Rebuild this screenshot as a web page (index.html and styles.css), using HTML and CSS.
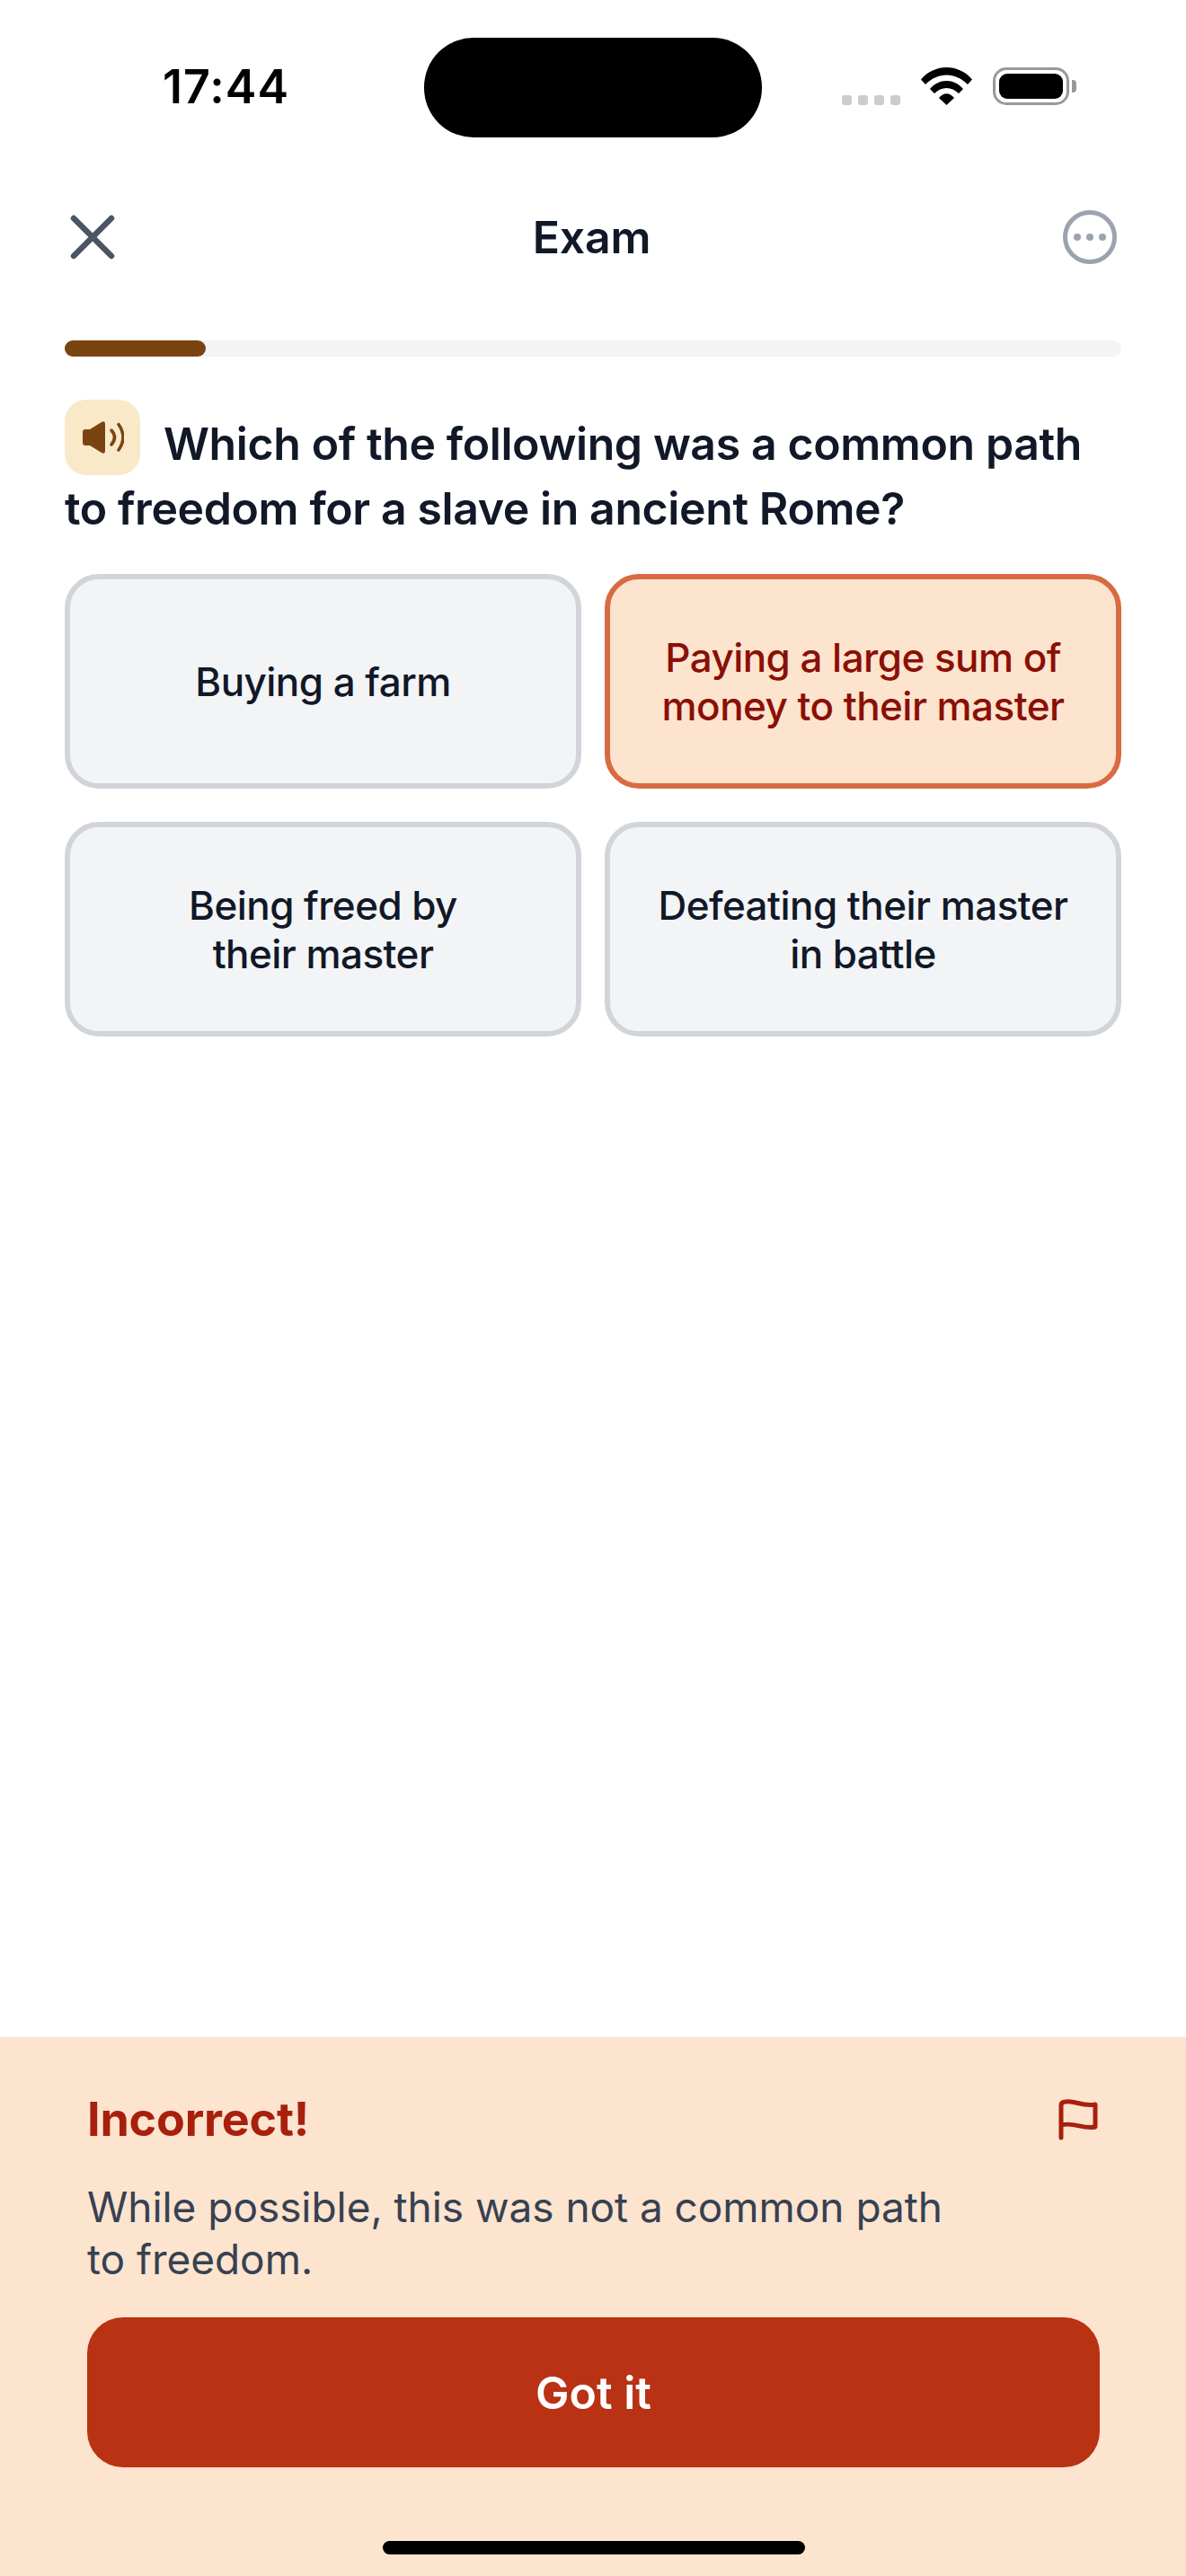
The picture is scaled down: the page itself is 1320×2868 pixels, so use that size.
FILE: index.html
```html
<!DOCTYPE html>
<html lang="en">
<head>
  <meta charset="UTF-8" />
  <meta name="viewport" content="width=device-width, initial-scale=1.0" />
  <title>Exam</title>
  <link rel="stylesheet" href="styles.css">
</head>
<body>
  <!-- Status bar -->
  <div class="status-bar">
    <span class="time">17:44</span>
    <div class="island"></div>
    <div class="status-icons">
      <div class="signal"><i></i><i></i><i></i><i></i></div>
      <svg class="wifi" width="57" height="42" viewBox="0 0 57 42">
        <path d="M0 13.5C15-4.5 42-4.5 57 13.5L52 19C38 5 19 5 5 19Z" />
        <path d="M10 24C20 12 37 12 47 24L42 29C34 21 23 21 15 29Z" />
        <path d="M20 34C25 27.5 32 27.5 37 34L28.5 42Z" />
      </svg>
      <div class="battery"><div class="battery-level"></div></div>
      <div class="battery-cap"></div>
    </div>
  </div>

  <header class="nav">
    <svg class="close" width="62" height="62" viewBox="0 0 62 62">
      <path d="M10 10L52 52M52 10L10 52" />
    </svg>
    <h1>Exam</h1>
    <svg class="more" width="60" height="60" viewBox="0 0 60 60">
      <circle class="more-ring" cx="30" cy="30" r="27.5" />
      <circle cx="16" cy="30" r="4" />
      <circle cx="30" cy="30" r="4" />
      <circle cx="44" cy="30" r="4" />
    </svg>
  </header>

  <div class="progress"><div class="progress-fill"></div></div>

  <!-- Question -->
  <section class="question">
    <div class="speaker">
      <svg width="46" height="36" viewBox="0 0 46 36">
        <path class="speaker-body" d="M0 12Q0 9 3 9H8L21 1Q25-1 25 3V33Q25 37 21 35L8 27H3Q0 27 0 24Z" />
        <path class="speaker-wave" d="M32 10Q39 18 32 26M40 3.5Q50 18 40 32" />
      </svg>
    </div>
    <h2>Which of the following was a common path to freedom for a slave in ancient Rome?</h2>
  </section>

  <section class="options">
    <div class="option">Buying a farm</div>
    <div class="option option-wrong">Paying a large sum of<br>money to their master</div>
    <div class="option">Being freed by<br>their master</div>
    <div class="option">Defeating their master<br>in battle</div>
  </section>

  <!-- Feedback panel -->
  <footer class="feedback">
    <div class="feedback-head">
      <h3>Incorrect!</h3>
      <svg class="flag" width="44" height="46" viewBox="0 0 44 46">
        <path d="M3 43V7Q3 3 8 3C18 1 27 9 41 6V31C27 34 18 25 3 29" />
      </svg>
    </div>
    <p>While possible, this was not a common path to freedom.</p>
    <button class="got-it">Got it</button>
    <div class="home-bar"></div>
  </footer>
</body>
</html>
```

FILE: styles.css
```css
* {
  box-sizing: border-box;
}

body, h1, h2, h3, p {
  margin: 0;
  padding: 0;
}

body {
  width: 1320px;
  height: 2868px;
  display: flex;
  flex-direction: column;
  background-color: #fff;
  color: #111827;
  font-family: 'Inter', sans-serif;
  overflow: hidden;
}

.status-bar {
  height: 233px;
  padding: 42px 122px 0 181px;
  display: flex;
  align-items: flex-start;
}

.time {
  width: 291px;
  margin-top: 25px;
  font-size: 52px;
  line-height: 60px;
  font-weight: 600;
  letter-spacing: 1px;
  color: #000;
}

.island {
  width: 376px;
  height: 111px;
  background-color: #000;
  border-radius: 55px;
}

.status-icons {
  margin: 33px 0 0 89px;
  display: flex;
  align-items: flex-end;
}

.signal {
  display: flex;
  gap: 7px;
  margin-right: 23px;
}

.signal i {
  width: 11px;
  height: 11px;
  background-color: #ccc;
  border-radius: 3px;
}

.wifi {
  display: block;
  margin-right: 23px;
}

.battery {
  width: 85px;
  height: 42px;
  padding: 4px;
  border: 3px solid #999;
  border-radius: 15px;
}

.battery-level {
  height: 100%;
  background-color: #000;
  border-radius: 9px;
}

.battery-cap {
  width: 5px;
  height: 14px;
  margin: 0 0 14px 3px;
  background-color: #999;
  border-radius: 0 4px 4px 0;
}

.nav {
  height: 62px;
  padding: 0 77px 0 72px;
  display: flex;
  align-items: center;
  justify-content: space-between;
}

.nav h1 {
  font-size: 50px;
  line-height: 62px;
  font-weight: 600;
  letter-spacing: -0.2px;
  color: #111827;
}

.close path {
  fill: none;
  stroke: #4b5563;
  stroke-width: 6.5;
  stroke-linecap: round;
}

.more circle {
  fill: #9ca3af;
}

.more .more-ring {
  fill: none;
  stroke: #9ca3af;
  stroke-width: 5;
}

.progress {
  height: 18px;
  margin: 84px 72px 0;
  background-color: #f3f4f6;
  border-radius: 9px;
}

.progress-fill {
  width: 157px;
  height: 100%;
  background-color: #7a4411;
  border-radius: 9px;
}

.question {
  margin: 61px 72px 0;
}

.speaker {
  float: left;
  width: 84px;
  height: 84px;
  margin: -13px 26px 0 0;
  display: flex;
  align-items: center;
  justify-content: center;
  background-color: #f9e9c9;
  border-radius: 24px;
}

.speaker svg {
  margin-left: 2px;
}

.speaker-body {
  fill: #7a4411;
}

.speaker-wave {
  fill: none;
  stroke: #7a4411;
  stroke-width: 3.5;
  stroke-linecap: round;
}

.question h2 {
  font-size: 50px;
  line-height: 72px;
  font-weight: 600;
  letter-spacing: -0.4px;
}

.options {
  margin: 37px 72px 0;
  display: grid;
  grid-template-columns: 1fr 1fr;
  grid-auto-rows: 239px;
  gap: 37px 26px;
}

.option {
  display: flex;
  align-items: center;
  justify-content: center;
  text-align: center;
  font-size: 44px;
  line-height: 54px;
  font-weight: 500;
  letter-spacing: -0.55px;
  background-color: #f3f4f6;
  border: 6px solid #d1d5d9;
  border-radius: 38px;
}

.option-wrong {
  color: #8b0f06;
  background-color: #fce4cf;
  border-color: #d96b42;
}

.feedback {
  margin-top: auto;
  height: 600px;
  padding: 62px 96px 0 97px;
  background-color: #fce4cf;
}

.feedback-head {
  height: 60px;
  display: flex;
  align-items: center;
  justify-content: space-between;
}

.feedback-head h3 {
  font-size: 52px;
  line-height: 60px;
  font-weight: 700;
  letter-spacing: -0.2px;
  color: #a8200d;
}

.flag {
  margin-right: 2px;
}

.flag path {
  fill: none;
  stroke: #a8200d;
  stroke-width: 5;
  stroke-linecap: round;
  stroke-linejoin: round;
}

.feedback p {
  max-width: 980px;
  margin-top: 38px;
  font-size: 46px;
  line-height: 58px;
  letter-spacing: -0.05px;
  color: #374151;
}

.got-it {
  display: block;
  width: 100%;
  height: 167px;
  margin-top: 36px;
  border: none;
  border-radius: 40px;
  background-color: #b93214;
  color: #fff;
  font-family: 'Inter', sans-serif;
  font-size: 50px;
  font-weight: 600;
}

.home-bar {
  width: 470px;
  height: 15px;
  margin: 82px auto 0;
  background-color: #000;
  border-radius: 8px;
}
```
